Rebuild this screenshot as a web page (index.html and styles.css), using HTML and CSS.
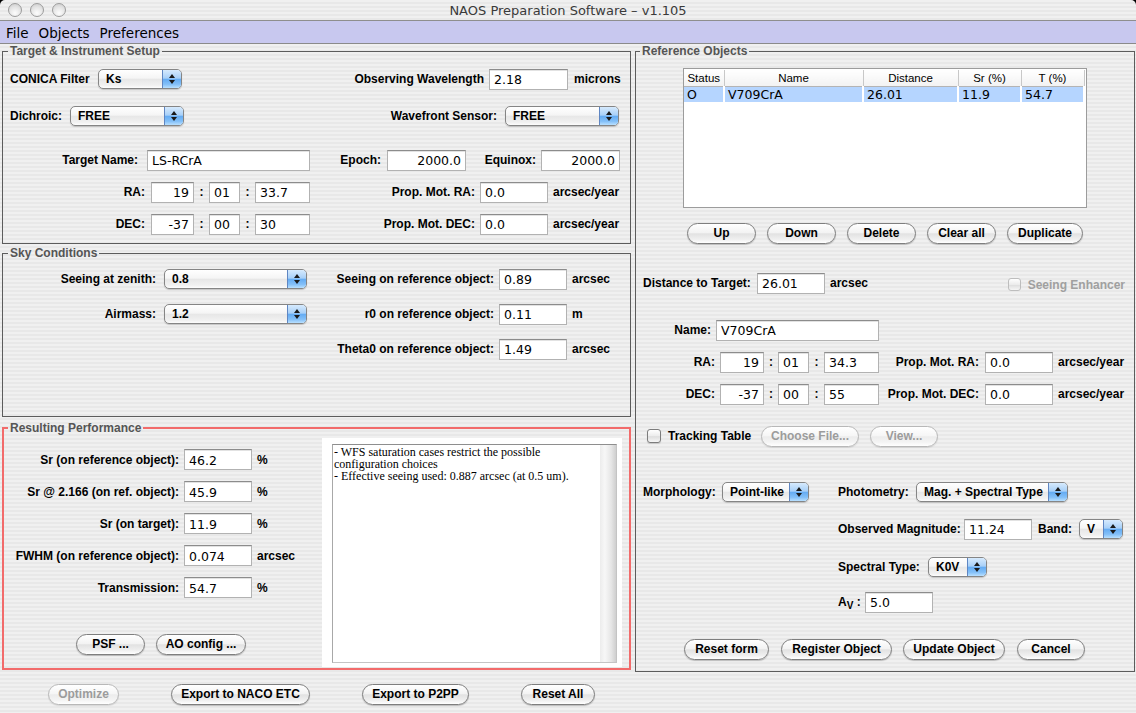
FILE: index.html
```html
<!DOCTYPE html>
<html lang="en">
<head>
    <meta charset="UTF-8">
    <title>NAOS Preparation Software – v1.105</title>
    <link rel="stylesheet" href="styles.css">
</head>
<body>
<div class="window">
    <div class="titlebar">
        <div class="lights"><span></span><span></span><span></span></div>
        <div class="title">NAOS Preparation Software – v1.105</div>
    </div>
    <div class="menubar">
        <span>File</span><span>Objects</span><span>Preferences</span>
    </div>

    <div class="main">
        <div class="left">
            <!-- Target & Instrument Setup -->
            <fieldset class="group target">
                <legend>Target &amp; Instrument Setup</legend>
                <div class="rows">
                    <div class="row mt10 pl7">
                        <span class="lb l w88">CONICA Filter</span>
                        <div class="popup w84"><span class="val">Ks</span><span class="arr"></span></div>
                        <span class="lb w302">Observing Wavelength</span>
                        <input class="tf ml5 w79" value="2.18">
                        <span class="lb ml6">microns</span>
                    </div>
                    <div class="row mt15 pl7">
                        <span class="lb l w60">Dichroic:</span>
                        <div class="popup w114"><span class="val">FREE</span><span class="arr"></span></div>
                        <span class="lb w313">Wavefront Sensor:</span>
                        <div class="popup ml8 w114"><span class="val">FREE</span><span class="arr"></span></div>
                    </div>
                    <div class="row mt22">
                        <span class="lb w135">Target Name:</span>
                        <input class="tf ml9 w163" value="LS-RCrA">
                        <span class="lb w71">Epoch:</span>
                        <input class="tf r ml6 w79" value="2000.0">
                        <span class="lb w70">Equinox:</span>
                        <input class="tf r ml5 w79" value="2000.0">
                    </div>
                    <div class="row mt10">
                        <span class="lb w142">RA:</span>
                        <input class="tf r ml6 w43" value="19">
                        <span class="colon">:</span>
                        <input class="tf w31" value="01">
                        <span class="colon">:</span>
                        <input class="tf w55" value="33.7">
                        <span class="lb w165">Prop. Mot. RA:</span>
                        <input class="tf ml5 w68" value="0.0">
                        <span class="lb ml5">arcsec/year</span>
                    </div>
                    <div class="row mt10">
                        <span class="lb w142">DEC:</span>
                        <input class="tf r ml6 w43" value="-37">
                        <span class="colon">:</span>
                        <input class="tf w31" value="00">
                        <span class="colon">:</span>
                        <input class="tf w55" value="30">
                        <span class="lb w165">Prop. Mot. DEC:</span>
                        <input class="tf ml5 w68" value="0.0">
                        <span class="lb ml5">arcsec/year</span>
                    </div>
                </div>
            </fieldset>

            <!-- Sky Conditions -->
            <fieldset class="group sky">
                <legend>Sky Conditions</legend>
                <div class="rows">
                    <div class="row">
                        <span class="lb w153">Seeing at zenith:</span>
                        <div class="popup ml8 w143"><span class="val">0.8</span><span class="arr"></span></div>
                        <span class="lb w187">Seeing on reference object:</span>
                        <input class="tf ml5 w68" value="0.89">
                        <span class="lb ml5">arcsec</span>
                    </div>
                    <div class="row mt13">
                        <span class="lb w153">Airmass:</span>
                        <div class="popup ml8 w143"><span class="val">1.2</span><span class="arr"></span></div>
                        <span class="lb w187">r0 on reference object:</span>
                        <input class="tf ml5 w68" value="0.11">
                        <span class="lb ml5">m</span>
                    </div>
                    <div class="row mt13">
                        <span class="w304"></span>
                        <span class="lb w187">Theta0 on reference object:</span>
                        <input class="tf ml5 w68" value="1.49">
                        <span class="lb ml5">arcsec</span>
                    </div>
                </div>
            </fieldset>

            <!-- Resulting Performance -->
            <fieldset class="group perf">
                <legend>Resulting Performance</legend>
                <div class="perf-body">
                    <div class="perf-left">
                        <div class="row">
                            <span class="lb w175">Sr (on reference object):</span>
                            <input class="tf ml5 w68" value="46.2">
                            <span class="lb ml5">%</span>
                        </div>
                        <div class="row mt11">
                            <span class="lb w175">Sr @ 2.166 (on ref. object):</span>
                            <input class="tf ml5 w68" value="45.9">
                            <span class="lb ml5">%</span>
                        </div>
                        <div class="row mt11">
                            <span class="lb w175">Sr (on target):</span>
                            <input class="tf ml5 w68" value="11.9">
                            <span class="lb ml5">%</span>
                        </div>
                        <div class="row mt11">
                            <span class="lb w175">FWHM (on reference object):</span>
                            <input class="tf ml5 w68" value="0.074">
                            <span class="lb ml5">arcsec</span>
                        </div>
                        <div class="row mt11">
                            <span class="lb w175">Transmission:</span>
                            <input class="tf ml5 w68" value="54.7">
                            <span class="lb ml5">%</span>
                        </div>
                        <div class="row btnrow perf-btns">
                            <button class="btn w69">PSF ...</button>
                            <button class="btn ml11 w90">AO config ...</button>
                        </div>
                    </div>
                    <div class="log-wrap">
                        <div class="log">
                            <div class="log-text">- WFS saturation cases restrict the possible<br>configuration choices<br>- Effective seeing used: 0.887 arcsec (at 0.5 um).</div>
                            <div class="vscroll"></div>
                        </div>
                    </div>
                </div>
            </fieldset>
        </div>

        <!-- Reference Objects -->
        <fieldset class="group refs">
            <legend>Reference Objects</legend>
            <div class="rows">
                <div class="table-box">
                    <table>
                        <thead>
                            <tr><th class="c1">Status</th><th class="c2">Name</th><th class="c3">Distance</th><th class="c4">Sr (%)</th><th class="c5">T (%)</th></tr>
                        </thead>
                        <tbody>
                            <tr class="sel"><td>O</td><td>V709CrA</td><td>26.01</td><td>11.9</td><td>54.7</td></tr>
                        </tbody>
                    </table>
                </div>
                <div class="row btnrow list-btns">
                    <button class="btn w69">Up</button>
                    <button class="btn w69">Down</button>
                    <button class="btn w69">Delete</button>
                    <button class="btn w69">Clear all</button>
                    <button class="btn w76">Duplicate</button>
                </div>
                <div class="row mt28 pl7">
                    <span class="lb l w114">Distance to Target:</span>
                    <input class="tf w68" value="26.01">
                    <span class="lb ml5">arcsec</span>
                    <span class="enhancer"><span class="cb off"></span><span class="lb dim ml7">Seeing Enhancer</span></span>
                </div>
                <div class="row mt25">
                    <span class="lb w75">Name:</span>
                    <input class="tf ml5 w163" value="V709CrA">
                </div>
                <div class="row mt10">
                    <span class="lb w79">RA:</span>
                    <input class="tf r ml5 w44" value="19">
                    <span class="colon w14">:</span>
                    <input class="tf w31" value="01">
                    <span class="colon">:</span>
                    <input class="tf w55" value="34.3">
                    <span class="lb w100">Prop. Mot. RA:</span>
                    <input class="tf ml6 w68" value="0.0">
                    <span class="lb ml5">arcsec/year</span>
                </div>
                <div class="row mt10">
                    <span class="lb w79">DEC:</span>
                    <input class="tf r ml5 w44" value="-37">
                    <span class="colon w14">:</span>
                    <input class="tf w31" value="00">
                    <span class="colon">:</span>
                    <input class="tf w55" value="55">
                    <span class="lb w100">Prop. Mot. DEC:</span>
                    <input class="tf ml6 w68" value="0.0">
                    <span class="lb ml5">arcsec/year</span>
                </div>
                <div class="row mt20 pl11">
                    <span class="cb"></span>
                    <span class="lb l ml7 w93">Tracking Table</span>
                    <button class="btn off w98">Choose File...</button>
                    <button class="btn off ml11 w68">View...</button>
                </div>
                <div class="row mt34 pl7">
                    <span class="lb l w79">Morphology:</span>
                    <div class="popup w87"><span class="val">Point-like</span><span class="arr"></span></div>
                    <span class="lb l ml29 w78">Photometry:</span>
                    <div class="popup w152"><span class="val">Mag. + Spectral Type</span><span class="arr"></span></div>
                </div>
                <div class="row mt15 pl202">
                    <span class="lb l w126">Observed Magnitude:</span>
                    <input class="tf w68" value="11.24">
                    <span class="lb l ml6 w41">Band:</span>
                    <div class="popup w44"><span class="val">V</span><span class="arr"></span></div>
                </div>
                <div class="row mt16 pl202">
                    <span class="lb l w90">Spectral Type:</span>
                    <div class="popup w59"><span class="val">K0V</span><span class="arr"></span></div>
                </div>
                <div class="row mt13 pl202">
                    <span class="lb l w27">A<sub>V</sub> :</span>
                    <input class="tf w68" value="5.0">
                </div>
                <div class="row btnrow form-btns">
                    <button class="btn w85">Reset form</button>
                    <button class="btn ml12 w111">Register Object</button>
                    <button class="btn ml11 w102">Update Object</button>
                    <button class="btn ml12 w68">Cancel</button>
                </div>
            </div>
        </fieldset>
    </div>

    <div class="bottombar">
        <button class="btn off w71">Optimize</button>
        <button class="btn w139">Export to NACO ETC</button>
        <button class="btn w107">Export to P2PP</button>
        <button class="btn w74">Reset All</button>
    </div>
</div>
</body>
</html>
```

FILE: styles.css
```css
* {
    box-sizing: border-box;
}
html, body {
    margin: 0;
    padding: 0;
}
body {
    background: #000;
    width: 1136px;
    height: 713px;
    overflow: hidden;
    font-family: "Liberation Sans", Arial, sans-serif;
}
.window {
    width: 1136px;
    height: 713px;
    border-radius: 5px 5px 0 0;
    overflow: hidden;
    background: repeating-linear-gradient(to bottom, #f0f0f0 0, #f0f0f0 2px, #e8e8e8 2px, #e8e8e8 4px);
}

/* Title bar */
.titlebar {
    height: 21px;
    display: flex;
    align-items: center;
    border-bottom: 1px solid #8e8e8e;
}
.lights {
    display: flex;
    gap: 8px;
    width: 80px;
    padding-left: 8px;
}
.lights span {
    width: 14px;
    height: 14px;
    border-radius: 50%;
    border: 1px solid #9c9c9c;
    background: radial-gradient(circle at 50% 75%, #fdfdfd 0, #e4e4e4 55%, #c8c8c8 100%);
}
.title {
    flex: 1;
    margin-right: 80px;
    text-align: center;
    font: 13px "DejaVu Sans", sans-serif;
    color: #3a3a3a;
}

/* Menu */
.menubar {
    height: 23px;
    display: flex;
    align-items: center;
    gap: 10px;
    padding: 1px 0 0 6px;
    background: #c8c8ef;
    border-bottom: 1px solid #8a8a8a;
    font: 13.5px "DejaVu Sans", sans-serif;
    color: #000;
}

/* Layout */
.main {
    display: flex;
    gap: 4px;
    padding-left: 2px;
}
.left {
    width: 629px;
    display: flex;
    flex-direction: column;
}
.group {
    margin: 0;
    padding: 0;
    min-width: 0;
    border: 1px solid #5c5c5c;
}
.group legend {
    margin-left: 5px;
    padding: 0 2px;
    font: bold 12px/14px "Liberation Sans", Arial, sans-serif;
    color: #555;
}
.rows {
    display: flex;
    flex-direction: column;
}
.target .rows {
    padding-bottom: 8px;
}
.sky {
    margin-top: 2px;
}
.sky .rows {
    padding: 8px 0 56px;
}
.perf {
    margin-top: 4px;
    border: 2px solid #f26b6b;
}
.perf legend {
    margin-left: 4px;
}
.refs {
    width: 500px;
}
.refs legend {
    margin-left: 4px;
}
.refs .rows {
    padding-bottom: 11px;
}

.row {
    display: flex;
    align-items: center;
    height: 22px;
}
.btnrow {
    height: 21px;
}

/* Labels */
.lb {
    flex: none;
    font: bold 12px "Liberation Sans", Arial, sans-serif;
    color: #000;
    text-align: right;
    white-space: nowrap;
}
.lb.l {
    text-align: left;
}
.lb.dim {
    color: #a0a0a0;
}
.lb sub {
    font-size: 10px;
    vertical-align: -3px;
    line-height: 0;
}
.colon {
    flex: none;
    width: 15px;
    text-align: center;
    font: bold 12px "Liberation Sans", Arial, sans-serif;
}

/* Text fields */
.tf {
    flex: none;
    height: 21px;
    margin: 0;
    padding: 1px 4px 0;
    border: 1px solid #b2b2b2;
    border-top-color: #8c8c8c;
    box-shadow: inset 0 1px 0 #e2e2e2;
    background: #fff;
    font: 12.5px "DejaVu Sans", sans-serif;
    color: #000;
    outline: none;
}
.tf.r {
    text-align: right;
}

/* Popup menus */
.popup {
    flex: none;
    display: flex;
    height: 20px;
    border: 1px solid #858585;
    border-radius: 5px;
    background: linear-gradient(#ffffff 0%, #f5f5f5 45%, #e7e7e7 52%, #f1f1f1 85%, #fdfdfd 100%);
    box-shadow: 0 1px 1px rgba(0, 0, 0, 0.18);
    overflow: hidden;
}
.popup .val {
    flex: 1;
    padding-left: 7px;
    font: bold 12px/18px "Liberation Sans", Arial, sans-serif;
    color: #000;
    white-space: nowrap;
}
.popup .arr {
    position: relative;
    width: 19px;
    border-left: 1px solid #5f86c2;
    background: linear-gradient(#d6eafd 0%, #a8d0f8 45%, #65acf3 52%, #84c0f8 80%, #b9e0ff 100%);
}
.popup .arr::before,
.popup .arr::after {
    content: "";
    position: absolute;
    left: 6px;
    border-left: 3px solid transparent;
    border-right: 3px solid transparent;
}
.popup .arr::before {
    top: 4px;
    border-bottom: 4px solid #1a1a1a;
}
.popup .arr::after {
    top: 10px;
    border-top: 4px solid #1a1a1a;
}

/* Buttons */
.btn {
    flex: none;
    height: 21px;
    margin: 0;
    padding: 0;
    border: 1px solid #7e7e7e;
    border-radius: 11px;
    background: linear-gradient(#ffffff 0%, #f3f3f3 45%, #e2e2e2 52%, #efefef 80%, #ffffff 100%);
    box-shadow: 0 1px 1px rgba(0, 0, 0, 0.22);
    font: bold 12px/19px "Liberation Sans", Arial, sans-serif;
    color: #000;
    text-align: center;
    white-space: nowrap;
}
.btn.off {
    border-color: #b8b8b8;
    color: #9c9c9c;
    background: linear-gradient(#ffffff 0%, #f6f6f6 45%, #ececec 52%, #f4f4f4 80%, #ffffff 100%);
    box-shadow: 0 1px 1px rgba(0, 0, 0, 0.1);
}

/* Checkboxes */
.cb {
    flex: none;
    width: 14px;
    height: 14px;
    border: 1px solid #7c7c7c;
    border-radius: 3px;
    background: linear-gradient(#ffffff, #ececec 50%, #dedede 55%, #f6f6f6);
    box-shadow: 0 1px 1px rgba(0, 0, 0, 0.15);
}
.cb.off {
    width: 13px;
    height: 13px;
    border-color: #bdbdbd;
    box-shadow: none;
}
.enhancer {
    display: flex;
    align-items: center;
    margin-left: auto;
    margin-top: 3px;
    padding-right: 9px;
}

/* Resulting performance */
.perf-body {
    display: flex;
    height: 233px;
}
.perf-left {
    width: 318px;
    padding-top: 14px;
}
.perf-left .row {
    height: 21px;
}
.perf-btns {
    margin-top: 36px;
    padding-left: 72px;
}
.log-wrap {
    width: 300px;
    height: 229px;
    margin-top: 3px;
    padding: 6px 5px 4px 10px;
    background: #fff;
}
.log {
    display: flex;
    height: 100%;
    border: 1px solid #c4c4c4;
    border-top-color: #8e8e8e;
    border-left-color: #a8a8a8;
}
.log-text {
    flex: 1;
    padding: 1px 1px 0;
    font: 12px/12px "Liberation Serif", "Times New Roman", serif;
    color: #000;
}
.vscroll {
    width: 16px;
    background: linear-gradient(to right, #ececec, #f7f7f7 30%, #e6e6e6 70%, #cfcfcf);
}

/* Reference table */
.table-box {
    width: 404px;
    height: 140px;
    margin: 10px 0 0 47px;
    padding: 1px 0 0;
    border: 1px solid #9c9c9c;
    background: #fff;
}
.table-box table {
    border-collapse: collapse;
    table-layout: fixed;
    width: 400px;
}
.table-box th {
    height: 16px;
    padding: 0;
    font: 11.5px "Liberation Sans", Arial, sans-serif;
    font-weight: normal;
    color: #000;
    text-align: center;
    border-right: 1px solid #c8c8c8;
    border-bottom: 1px solid #b4b4b4;
    background: linear-gradient(#ffffff, #f2f2f2);
}
.c1 { width: 40px; }
.c2 { width: 139px; }
.c3 { width: 95px; }
.c4 { width: 63px; }
.c5 { width: 63px; }
.table-box td {
    height: 15px;
    padding: 0 0 0 3px;
    font: 12.5px/15px "DejaVu Sans", sans-serif;
    color: #000;
    border-right: 2px solid #fff;
    white-space: nowrap;
}
.table-box tr.sel td {
    background: #b5d5ff;
}
.list-btns {
    margin-top: 15px;
    padding-left: 51px;
    gap: 11px;
}
.form-btns {
    margin-top: 26px;
    padding-left: 48px;
}

/* Bottom bar */
.bottombar {
    display: flex;
    gap: 52px;
    padding: 12px 0 0 48px;
}

/* spacing helpers */
.mt10 { margin-top: 10px; }
.mt11 { margin-top: 11px; }
.mt13 { margin-top: 13px; }
.mt15 { margin-top: 15px; }
.mt16 { margin-top: 16px; }
.mt20 { margin-top: 20px; }
.mt22 { margin-top: 22px; }
.mt25 { margin-top: 25px; }
.mt28 { margin-top: 28px; }
.mt34 { margin-top: 34px; }
.ml5 { margin-left: 5px; }
.ml6 { margin-left: 6px; }
.ml7 { margin-left: 7px; }
.ml8 { margin-left: 8px; }
.ml9 { margin-left: 9px; }
.ml11 { margin-left: 11px; }
.ml12 { margin-left: 12px; }
.ml29 { margin-left: 29px; }
.pl7 { padding-left: 7px; }
.pl11 { padding-left: 11px; }
.pl202 { padding-left: 202px; }

/* widths */
.w14 { width: 14px; }
.w27 { width: 27px; }
.w31 { width: 31px; }
.w41 { width: 41px; }
.w43 { width: 43px; }
.w44 { width: 44px; }
.w55 { width: 55px; }
.w59 { width: 59px; }
.w60 { width: 60px; }
.w68 { width: 68px; }
.w69 { width: 69px; }
.w70 { width: 70px; }
.w71 { width: 71px; }
.w74 { width: 74px; }
.w75 { width: 75px; }
.w76 { width: 76px; }
.w78 { width: 78px; }
.w79 { width: 79px; }
.w84 { width: 84px; }
.w85 { width: 85px; }
.w87 { width: 87px; }
.w88 { width: 88px; }
.w90 { width: 90px; }
.w93 { width: 93px; }
.w98 { width: 98px; }
.w100 { width: 100px; }
.w102 { width: 102px; }
.w107 { width: 107px; }
.w111 { width: 111px; }
.w114 { width: 114px; }
.w126 { width: 126px; }
.w135 { width: 135px; }
.w139 { width: 139px; }
.w142 { width: 142px; }
.w143 { width: 143px; }
.w152 { width: 152px; }
.w153 { width: 153px; }
.w163 { width: 163px; }
.w165 { width: 165px; }
.w175 { width: 175px; }
.w187 { width: 187px; }
.w302 { width: 302px; }
.w304 { width: 304px; flex: none; }
.w313 { width: 313px; }
```
